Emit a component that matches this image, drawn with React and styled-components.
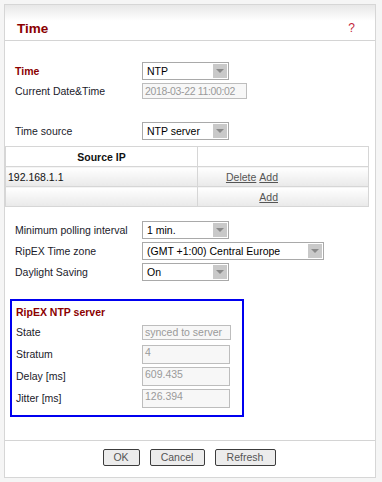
import React from "react";
import styled, { createGlobalStyle } from "styled-components";

const GlobalStyle = createGlobalStyle`
  html, body {
    margin: 0;
    padding: 0;
    background: #f5f5f5;
    font-family: "Liberation Sans", Arial, sans-serif;
    font-size: 10.5px;
    color: #111;
  }
`;

const Panel = styled.div`
  box-sizing: border-box;
  margin: 4px;
  width: 372px;
  height: 474px;
  background: #fff;
  border: 1px solid #d6d6d6;
  display: flex;
  flex-direction: column;
`;

const Header = styled.div`
  box-sizing: border-box;
  height: 36px;
  flex: none;
  display: flex;
  align-items: flex-end;
  justify-content: space-between;
  padding: 0 20px 4px 12px;
  border-bottom: 1px solid #d4d4d4;
  background: linear-gradient(180deg, #e7e7e7 0%, #ffffff 45%, #ffffff 100%);
`;

const Title = styled.div`
  font-size: 13.5px;
  font-weight: bold;
  color: #8b0000;
`;

const Help = styled.div`
  font-size: 12px;
  color: #c4283c;
  padding-bottom: 1px;
`;

const Body = styled.div`
  flex: 1;
  display: flex;
  flex-direction: column;
  padding-top: 20px;
`;

const Row = styled.div`
  display: grid;
  grid-template-columns: ${(p) => p.$label || 127}px auto;
  align-items: center;
  height: ${(p) => p.$h || 20}px;
  padding-left: ${(p) => p.$indent ?? 10}px;
`;

const Label = styled.div`
  color: ${(p) => (p.$accent ? "#8b0000" : "#1a1a2a")};
  font-weight: ${(p) => (p.$accent ? "bold" : "normal")};
  white-space: nowrap;
`;

const SelectBox = styled.div`
  box-sizing: border-box;
  width: ${(p) => p.$w}px;
  height: 18px;
  border: 1px solid #a9a9a9;
  background: #fff;
  display: flex;
  align-items: center;
  padding-left: 4px;
  color: #000;
`;

const SelectText = styled.span`
  flex: 1;
  white-space: nowrap;
`;

const Arrow = styled.span`
  width: 14px;
  height: 14px;
  margin-right: 1px;
  background: #c9c9c9;
  display: flex;
  align-items: center;
  justify-content: center;
  &::after {
    content: "";
    border-left: 4px solid transparent;
    border-right: 4px solid transparent;
    border-top: 4px solid #8a8a8a;
  }
`;

const Field = styled.div`
  box-sizing: border-box;
  width: ${(p) => p.$w}px;
  height: ${(p) => p.$h || 19}px;
  border: 1px solid #bdbdbd;
  background: #f7f7f7;
  color: #9a9a9a;
  padding-left: 2px;
  display: flex;
  align-items: ${(p) => (p.$top ? "flex-start" : "center")};
  letter-spacing: ${(p) => p.$ls || 0}px;
  white-space: nowrap;
  overflow: hidden;
`;

const Spacer = styled.div`
  height: ${(p) => p.$h}px;
  flex: none;
`;

const Table = styled.table`
  border-collapse: collapse;
  width: 364px;
  td, th {
    border: 1px solid #d6d6d6;
    height: 19px;
    padding: 0 2px;
    font-size: 10.5px;
  }
  th {
    background: #fff;
    font-weight: bold;
    color: #111;
  }
  td {
    background: linear-gradient(180deg, #ffffff 0%, #f4f4f4 50%, #e9e9e9 100%);
  }
`;

const LinkCell = styled.td`
  text-align: right;
  padding-right: 90px !important;
`;

const TextLink = styled.a`
  color: #555;
  text-decoration: underline;
  cursor: pointer;
  & + & {
    margin-left: 3px;
  }
`;

const ServerBox = styled.div`
  box-sizing: border-box;
  margin-left: 5px;
  width: 234px;
  height: 118px;
  border: 2px solid #0000f0;
  padding: 1px 0 0 4px;
`;

const BoxTitle = styled.div`
  height: 19px;
  display: flex;
  align-items: center;
  font-weight: bold;
  color: #8b0000;
`;

const Footer = styled.div`
  box-sizing: border-box;
  flex: none;
  height: 37px;
  border-top: 1px solid #d4d4d4;
  display: flex;
  justify-content: center;
  align-items: flex-start;
  padding-top: 8px;
  gap: 10px;
  padding-right: 2px;
`;

const Button = styled.button`
  box-sizing: border-box;
  width: ${(p) => p.$w}px;
  height: 17px;
  padding: 0;
  border: 1px solid #3c3c3c;
  border-radius: 2px;
  background: #ececec;
  color: #555;
  font-family: "Liberation Sans", Arial, sans-serif;
  font-size: 10.5px;
  line-height: 15px;
`;

const Select = ({ w, children }) => (
  <SelectBox $w={w}>
    <SelectText>{children}</SelectText>
    <Arrow />
  </SelectBox>
);

export default function App() {
  return (
    <>
      <GlobalStyle />
      <Panel>
        <Header>
          <Title>Time</Title>
          <Help>?</Help>
        </Header>
        <Body>
          <Row>
            <Label $accent>Time</Label>
            <Select w={87}>NTP</Select>
          </Row>
          <Row>
            <Label>Current Date&amp;Time</Label>
            <Field $w={105} $h={16} $ls={-0.35}>2018-03-22 11:00:02</Field>
          </Row>
          <Spacer $h={20} />
          <Row>
            <Label>Time source</Label>
            <Select w={87}>NTP server</Select>
          </Row>
          <Spacer $h={5} />
          <Table>
            <tbody>
              <tr>
                <th style={{ width: 187 }}>Source IP</th>
                <th />
              </tr>
              <tr>
                <td>192.168.1.1</td>
                <LinkCell>
                  <TextLink>Delete</TextLink>
                  <TextLink>Add</TextLink>
                </LinkCell>
              </tr>
              <tr>
                <td />
                <LinkCell>
                  <TextLink>Add</TextLink>
                </LinkCell>
              </tr>
            </tbody>
          </Table>
          <Spacer $h={12} />
          <Row $h={21}>
            <Label>Minimum polling interval</Label>
            <Select w={87}>1 min.</Select>
          </Row>
          <Row $h={21}>
            <Label>RipEX Time zone</Label>
            <Select w={182}>(GMT +1:00) Central Europe</Select>
          </Row>
          <Row $h={21}>
            <Label>Daylight Saving</Label>
            <Select w={87}>On</Select>
          </Row>
          <Spacer $h={17} />
          <ServerBox>
            <BoxTitle>RipEX NTP server</BoxTitle>
            <Row $h={22} $label={126} $indent={0}>
              <Label>State</Label>
              <Field $w={89} $h={15} $top>synced to server</Field>
            </Row>
            <Row $h={22} $label={126} $indent={0}>
              <Label>Stratum</Label>
              <Field $w={88} $top>4</Field>
            </Row>
            <Row $h={22} $label={126} $indent={0}>
              <Label>Delay [ms]</Label>
              <Field $w={88} $top>609.435</Field>
            </Row>
            <Row $h={22} $label={126} $indent={0}>
              <Label>Jitter [ms]</Label>
              <Field $w={88} $top>126.394</Field>
            </Row>
          </ServerBox>
        </Body>
        <Footer>
          <Button $w={37}>OK</Button>
          <Button $w={55}>Cancel</Button>
          <Button $w={61}>Refresh</Button>
        </Footer>
      </Panel>
    </>
  );
}
